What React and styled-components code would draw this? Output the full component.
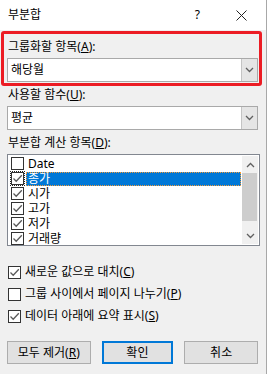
import React from "react";
import styled, { createGlobalStyle } from "styled-components";

const GlobalStyle = createGlobalStyle`
  html, body {
    margin: 0;
    padding: 0;
    background: #f0f0f0;
  }
  * {
    box-sizing: border-box;
  }
`;

const FONT = `"Segoe UI", "Noto Sans", "Noto Sans CJK KR", sans-serif`;

const Chevron = ({ up }) => (
  <svg width="9" height="6" viewBox="0 0 9 6">
    <polyline
      points={up ? "1,5 4.5,1.5 8,5" : "1,1 4.5,4.5 8,1"}
      fill="none"
      stroke="#606060"
      strokeWidth="1.3"
    />
  </svg>
);

const Check = () => (
  <svg width="11" height="11" viewBox="0 0 11 11">
    <polyline points="1.5,5.5 4.2,8.2 9.8,2.2" fill="none" stroke="#5a5a5a" strokeWidth="1.3" />
  </svg>
);

const items = [
  { label: "Date", checked: false },
  { label: "종가", checked: true, selected: true },
  { label: "시가", checked: true },
  { label: "고가", checked: true },
  { label: "저가", checked: true },
  { label: "거래량", checked: true },
];

export default function App() {
  return (
    <>
      <GlobalStyle />
      <Dialog>
        <TitleBar>
          <Title>부분합</Title>
          <TitleButtons>
            <Help>?</Help>
            <svg width="11" height="11" viewBox="0 0 11 11">
              <path d="M0.5 0.5 L10.5 10.5 M10.5 0.5 L0.5 10.5" stroke="#222" strokeWidth="1" />
            </svg>
          </TitleButtons>
        </TitleBar>

        <Body>
          <Marked>
            <Label>
              그룹화할 항목(<u>A</u>):
            </Label>
            <Combo>
              <ComboText>해당월</ComboText>
              <ComboArrow>
                <Chevron />
              </ComboArrow>
            </Combo>
            <RedFrame />
          </Marked>

          <Label>
            사용할 함수(<u>U</u>):
          </Label>
          <Combo>
            <ComboText>평균</ComboText>
            <ComboArrow>
              <Chevron />
            </ComboArrow>
          </Combo>

          <Label>
            부분합 계산 항목(<u>D</u>):
          </Label>
          <ListBox>
            <ListRows>
              {items.map((it) => (
                <ListRow key={it.label}>
                  <Box $focus={it.selected}>{it.checked && <Check />}</Box>
                  <RowText $selected={it.selected}>{it.label}</RowText>
                </ListRow>
              ))}
            </ListRows>
            <ScrollBar>
              <ScrollArrow>
                <Chevron up />
              </ScrollArrow>
              <Track>
                <Thumb />
              </Track>
              <ScrollArrow>
                <Chevron />
              </ScrollArrow>
            </ScrollBar>
          </ListBox>

          <Options>
            <Option>
              <Box>
                <Check />
              </Box>
              <span>
                새로운 값으로 대치(<u>C</u>)
              </span>
            </Option>
            <Option>
              <Box />
              <span>
                그룹 사이에서 페이지 나누기(<u>P</u>)
              </span>
            </Option>
            <Option>
              <Box>
                <Check />
              </Box>
              <span>
                데이터 아래에 요약 표시(<u>S</u>)
              </span>
            </Option>
          </Options>

          <Buttons>
            <Button $w={85}>
              모두 제거(<u>R</u>)
            </Button>
            <Button $w={73} $default>
              확인
            </Button>
            <Button $w={75}>취소</Button>
          </Buttons>
        </Body>
      </Dialog>
    </>
  );
}

const Dialog = styled.div`
  width: 267px;
  height: 374px;
  border-right: 1px solid #a8a8a8;
  background: #f0f0f0;
  font-family: ${FONT};
  font-size: 12px;
  color: #000;
  display: flex;
  flex-direction: column;
`;

const TitleBar = styled.div`
  height: 30px;
  background: #fff;
  display: flex;
  align-items: center;
  justify-content: space-between;
  padding: 0 19px 0 8px;
`;

const Title = styled.div`
  font-size: 12px;
  line-height: 16px;
`;

const TitleButtons = styled.div`
  display: flex;
  align-items: center;
  gap: 36px;
`;

const Help = styled.span`
  font-size: 12px;
  line-height: 16px;
`;

const Body = styled.div`
  display: flex;
  flex-direction: column;
  padding: 9px 8px 0 7px;
`;

const Marked = styled.div`
  position: relative;
  display: flex;
  flex-direction: column;
`;

const RedFrame = styled.div`
  position: absolute;
  left: -6px;
  right: -4px;
  top: -8px;
  bottom: 1px;
  border: 3px solid #ec1c24;
  border-radius: 3px;
  pointer-events: none;
`;

const Label = styled.div`
  line-height: 16px;
  height: 16px;
  padding-left: 1px;
  margin-bottom: 3px;
  white-space: nowrap;
`;

const Combo = styled.div`
  height: 24px;
  display: flex;
  background: #fff;
  border: 1px solid #a9a9a9;
  margin-bottom: 5px;
`;

const ComboText = styled.div`
  flex: 1;
  padding-left: 3px;
  line-height: 22px;
`;

const ComboArrow = styled.div`
  width: 16px;
  background: #e5e5e5;
  border-left: 1px solid #c4c4c4;
  display: flex;
  align-items: center;
  justify-content: center;
`;

const ListBox = styled.div`
  height: 92px;
  width: 253px;
  border: 1px solid #828790;
  background: #fff;
  display: flex;
  padding: 1px;
`;

const ListRows = styled.div`
  flex: 1;
  display: flex;
  flex-direction: column;
  padding-left: 2px;
`;

const ListRow = styled.div`
  height: 15px;
  display: flex;
  align-items: center;
  gap: 2px;
  flex-shrink: 0;
`;

const Box = styled.div`
  width: 13px;
  height: 13px;
  flex-shrink: 0;
  border: 1px solid #333;
  background: #fff;
  display: flex;
  align-items: center;
  justify-content: center;
  outline: ${(p) => (p.$focus ? "1px dotted #222" : "none")};
  outline-offset: 0px;
`;

const RowText = styled.div`
  flex: 1;
  height: 14px;
  line-height: 14px;
  padding-left: 2px;
  background: ${(p) => (p.$selected ? "#0078d7" : "transparent")};
  color: ${(p) => (p.$selected ? "#fff" : "#000")};
  outline: ${(p) => (p.$selected ? "1px dotted #f29b3a" : "none")};
  outline-offset: -1px;
`;

const ScrollBar = styled.div`
  width: 16px;
  margin-left: 1px;
  background: #f0f0f0;
  display: flex;
  flex-direction: column;
`;

const ScrollArrow = styled.div`
  height: 17px;
  display: flex;
  align-items: center;
  justify-content: center;
`;

const Track = styled.div`
  flex: 1;
  padding: 0 1px 0 0;
`;

const Thumb = styled.div`
  height: 48px;
  background: #cdcdcd;
`;

const Options = styled.div`
  display: flex;
  flex-direction: column;
  gap: 6px;
  margin-top: 18px;
  padding-left: 1px;
`;

const Option = styled.div`
  height: 16px;
  display: flex;
  align-items: center;
  gap: 4px;
  line-height: 16px;
  white-space: nowrap;
`;

const Buttons = styled.div`
  display: flex;
  gap: 11px;
  margin-top: 17px;
`;

const Button = styled.div`
  width: ${(p) => p.$w}px;
  height: 23px;
  display: flex;
  align-items: center;
  justify-content: center;
  background: #e1e1e1;
  border: ${(p) => (p.$default ? "2px solid #0078d7" : "1px solid #adadad")};
  line-height: 16px;
  white-space: nowrap;
`;
